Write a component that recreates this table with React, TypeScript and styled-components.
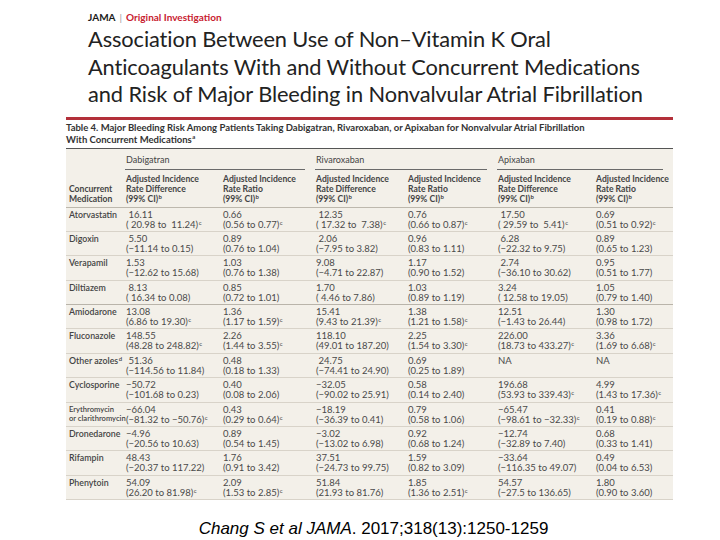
import React from 'react';
import styled, { createGlobalStyle } from 'styled-components';

const GlobalStyle = createGlobalStyle`
  html, body {
    margin: 0;
    padding: 0;
    background: #ffffff;
  }
  body {
    font-family: Lato, 'Open Sans', sans-serif;
  }
`;

const Page = styled.div`
  width: 720px;
  height: 540px;
  overflow: hidden;
  display: flex;
  flex-direction: column;
`;

const Masthead = styled.header`
  padding: 11px 0 0 88px;
  display: flex;
  flex-direction: column;
  gap: 2px;
`;

const Journal = styled.div`
  display: flex;
  align-items: center;
  gap: 4px;
  font-size: 10px;
  font-weight: 700;
  line-height: 12px;
`;

const JournalName = styled.span`
  color: #1a1a1a;
`;

const Divider = styled.span`
  color: #999;
  font-weight: 400;
`;

const Section = styled.span`
  color: #c8202f;
`;

const Headline = styled.h1`
  margin: 0;
  font-size: 21.8px;
  font-weight: 400;
  line-height: 27.5px;
  color: #222;
  letter-spacing: -0.1px;
`;

const TableBlock = styled.section`
  margin: 9px 0 0 66px;
  width: 607px;
  border-top: 3px solid #b3303a;
`;

const Caption = styled.div`
  padding: 2px 0 2px 0;
  font-size: 9.5px;
  line-height: 12px;
  font-weight: 700;
  color: #333;
  border-bottom: 1.5px solid #555;
`;

const Grid = styled.div`
  display: grid;
  grid-template-columns: 59px 97px 93px 92px 90px 98px 78px;
  background: #f3f0e9;
`;

const GroupHead = styled.div<{ $span: number }>`
  grid-column: span ${p => p.$span};
  margin-right: 10px;
  padding: 5px 0 3px 1px;
  font-size: 9px;
  line-height: 12px;
  color: #444;
  border-bottom: 1px solid #6a6a6a;
  align-self: end;
`;

const Blank = styled.div``;

const ColHead = styled.div<{ $first?: boolean }>`
  padding: ${p => (p.$first ? '10px 0 3px 3px' : '4px 0 3px 1px')};
  font-size: 8.6px;
  line-height: 10px;
  font-weight: 700;
  color: #444;
  align-self: end;
  white-space: nowrap;
  border-bottom: 1px solid #bdb8ad;
`;

const Line = styled.span`
  display: block;
`;

const Sup = styled.span`
  display: inline-block;
  margin-left: 0.5px;
  font-size: 6px;
  line-height: 6px;
  vertical-align: top;
`;

const Cell = styled.div<{ $first?: boolean; $strong?: boolean; $small?: boolean }>`
  padding: ${p => (p.$first ? '2px 0 2px 3px' : '2px 0 2px 1px')};
  height: 24.4px;
  box-sizing: border-box;
  font-size: ${p => (p.$small ? '7.6px' : p.$first ? '8.8px' : '9.5px')};
  line-height: ${p => (p.$small ? '9px' : '10px')};
  font-weight: ${p => (p.$first ? 600 : 400)};
  color: ${p => (p.$first ? '#444' : '#4a4a4a')};
  border-bottom: 1px solid ${p => (p.$strong ? '#b9b4aa' : '#d8d3c9')};
  white-space: pre;
`;

const Citation = styled.div`
  margin-top: 19px;
  padding-left: 8px;
  text-align: center;
  font-family: 'Liberation Sans', Arial, sans-serif;
  font-size: 17px;
  line-height: 20px;
  color: #000;
`;

type Pair = [string, string, string?];

interface Row {
  med: string;
  medSup?: string;
  cells: Pair[];
}

const rows: Row[] = [
  { med: 'Atorvastatin', cells: [[' 16.11', '( 20.98 to  11.24)', 'c'], ['0.66', '(0.56 to 0.77)', 'c'], [' 12.35', '( 17.32 to  7.38)', 'c'], ['0.76', '(0.66 to 0.87)', 'c'], [' 17.50', '( 29.59 to  5.41)', 'c'], ['0.69', '(0.51 to 0.92)', 'c']] },
  { med: 'Digoxin', cells: [[' 5.50', '(−11.14 to 0.15)'], ['0.89', '(0.76 to 1.04)'], [' 2.06', '(−7.95 to 3.82)'], ['0.96', '(0.83 to 1.11)'], [' 6.28', '(−22.32 to 9.75)'], ['0.89', '(0.65 to 1.23)']] },
  { med: 'Verapamil', cells: [['1.53', '(−12.62 to 15.68)'], ['1.03', '(0.76 to 1.38)'], ['9.08', '(−4.71 to 22.87)'], ['1.17', '(0.90 to 1.52)'], [' 2.74', '(−36.10 to 30.62)'], ['0.95', '(0.51 to 1.77)']] },
  { med: 'Diltiazem', cells: [[' 8.13', '( 16.34 to 0.08)'], ['0.85', '(0.72 to 1.01)'], ['1.70', '( 4.46 to 7.86)'], ['1.03', '(0.89 to 1.19)'], ['3.24', '( 12.58 to 19.05)'], ['1.05', '(0.79 to 1.40)']] },
  { med: 'Amiodarone', cells: [['13.08', '(6.86 to 19.30)', 'c'], ['1.36', '(1.17 to 1.59)', 'c'], ['15.41', '(9.43 to 21.39)', 'c'], ['1.38', '(1.21 to 1.58)', 'c'], ['12.51', '(−1.43 to 26.44)'], ['1.30', '(0.98 to 1.72)']] },
  { med: 'Fluconazole', cells: [['148.55', '(48.28 to 248.82)', 'c'], ['2.26', '(1.44 to 3.55)', 'c'], ['118.10', '(49.01 to 187.20)'], ['2.25', '(1.54 to 3.30)', 'c'], ['226.00', '(18.73 to 433.27)', 'c'], ['3.36', '(1.69 to 6.68)', 'c']] },
  { med: 'Other azoles', medSup: 'd', cells: [[' 51.36', '(−114.56 to 11.84)'], ['0.48', '(0.18 to 1.33)'], [' 24.75', '(−74.41 to 24.90)'], ['0.69', '(0.25 to 1.89)'], ['NA', ''], ['NA', '']] },
  { med: 'Cyclosporine', cells: [['−50.72', '(−101.68 to 0.23)'], ['0.40', '(0.08 to 2.06)'], ['−32.05', '(−90.02 to 25.91)'], ['0.58', '(0.14 to 2.40)'], ['196.68', '(53.93 to 339.43)', 'c'], ['4.99', '(1.43 to 17.36)', 'c']] },
  { med: 'Erythromycin\nor clarithromycin', cells: [['−66.04', '(−81.32 to −50.76)', 'c'], ['0.43', '(0.29 to 0.64)', 'c'], ['−18.19', '(−36.39 to 0.41)'], ['0.79', '(0.58 to 1.06)'], ['−65.47', '(−98.61 to −32.33)', 'c'], ['0.41', '(0.19 to 0.88)', 'c']] },
  { med: 'Dronedarone', cells: [['−4.96', '(−20.56 to 10.63)'], ['0.89', '(0.54 to 1.45)'], ['−3.02', '(−13.02 to 6.98)'], ['0.92', '(0.68 to 1.24)'], ['−12.74', '(−32.89 to 7.40)'], ['0.68', '(0.33 to 1.41)']] },
  { med: 'Rifampin', cells: [['48.43', '(−20.37 to 117.22)'], ['1.76', '(0.91 to 3.42)'], ['37.51', '(−24.73 to 99.75)'], ['1.59', '(0.82 to 3.09)'], ['−33.64', '(−116.35 to 49.07)'], ['0.49', '(0.04 to 6.53)']] },
  { med: 'Phenytoin', cells: [['54.09', '(26.20 to 81.98)', 'c'], ['2.09', '(1.53 to 2.85)', 'c'], ['51.84', '(21.93 to 81.76)'], ['1.85', '(1.36 to 2.51)', 'c'], ['54.57', '(−27.5 to 136.65)'], ['1.80', '(0.90 to 3.60)']] },
];

const groups = ['Dabigatran', 'Rivaroxaban', 'Apixaban'];
const subHeads: string[][] = [
  ['Adjusted Incidence', 'Rate Difference', '(99% CI)'],
  ['Adjusted Incidence', 'Rate Ratio', '(99% CI)'],
];

const App = () => (
  <Page>
    <GlobalStyle />
    <Masthead>
      <Journal>
        <JournalName>JAMA</JournalName>
        <Divider>|</Divider>
        <Section>Original Investigation</Section>
      </Journal>
      <Headline>
        Association Between Use of Non–Vitamin K Oral
        <br />
        Anticoagulants With and Without Concurrent Medications
        <br />
        and Risk of Major Bleeding in Nonvalvular Atrial Fibrillation
      </Headline>
    </Masthead>

    <TableBlock>
      <Caption>
        Table 4. Major Bleeding Risk Among Patients Taking Dabigatran, Rivaroxaban, or Apixaban for Nonvalvular Atrial Fibrillation
        <br />
        With Concurrent Medications<Sup>a</Sup>
      </Caption>
      <Grid>
        <Blank />
        {groups.map(g => (
          <GroupHead key={g} $span={2}>
            {g}
          </GroupHead>
        ))}
        <ColHead $first>
          <Line>Concurrent</Line>
          <Line>Medication</Line>
        </ColHead>
        {groups.map(g =>
          subHeads.map((lines, k) => (
            <ColHead key={g + k}>
              <Line>{lines[0]}</Line>
              <Line>{lines[1]}</Line>
              <Line>
                {lines[2]}
                <Sup>b</Sup>
              </Line>
            </ColHead>
          ))
        )}
        {rows.map((r, i) => (
          <React.Fragment key={r.med}>
            <Cell $first $strong={i === 3} $small={r.med.includes('\n')}>
              {r.med}
              {r.medSup && <Sup>{r.medSup}</Sup>}
            </Cell>
            {r.cells.map(([v, ci, sup], j) => (
              <Cell key={j} $strong={i === 3}>
                {v}
                {'\n'}
                {ci}
                {sup && <Sup>{sup}</Sup>}
              </Cell>
            ))}
          </React.Fragment>
        ))}
      </Grid>
      <Citation>
        <i>Chang S et al JAMA</i>. 2017;318(13):1250-1259
      </Citation>
    </TableBlock>
  </Page>
);

export default App;
